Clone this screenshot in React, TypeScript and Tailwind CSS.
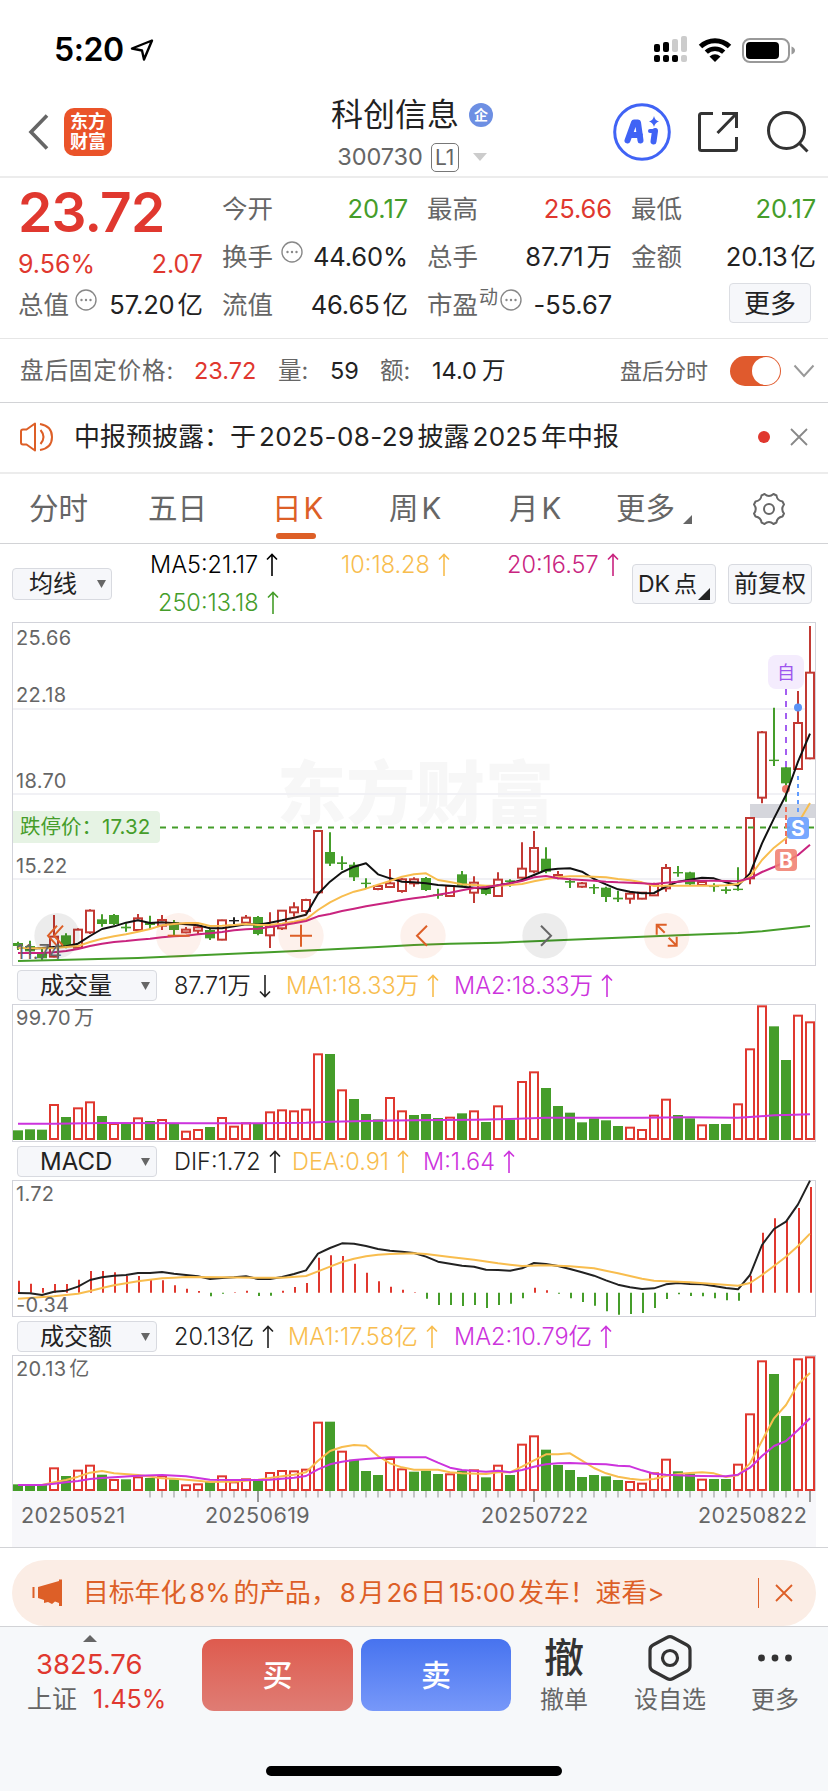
import React from "react";

type Pt = [number, number];
type Candle = [string, number, number, number, number];

const RED = "#e0382f";
const DARK_RED = "#c23a34";
const GREEN = "#459d2a";
const YELLOW = "#f8bd4e";
const PURPLE = "#cc33dd";
const MAGENTA = "#c9247f";

const x = (i: number) => 18 + 12 * i;

// kind, body top, body bottom, high, low (third-pixel units)
const candles: Candle[] = [
  ["g", 969, 978, 965, 990], ["g", 978, 994, 962, 1005], ["g", 998, 1015, 985, 1020], ["r", 950, 1010, 885, 1012],
  ["g", 946, 980, 940, 985], ["r", 929, 983, 925, 985], ["r", 872, 937, 868, 942], ["g", 898, 912, 883, 920],
  ["g", 885, 912, 882, 915], ["g", 920, 925, 910, 935], ["r", 895, 930, 882, 935], ["g", 907, 915, 887, 927],
  ["r", 900, 917, 885, 930], ["g", 906, 930, 900, 945], ["r", 929, 937, 921, 940], ["r", 922, 932, 918, 942],
  ["g", 930, 955, 925, 960], ["r", 901, 959, 899, 961], ["k", 900, 904, 892, 912], ["r", 893, 908, 885, 912],
  ["g", 891, 942, 888, 946], ["r", 920, 946, 877, 984], ["r", 872, 925, 870, 930], ["r", 862, 877, 847, 890],
  ["r", 840, 873, 836, 880], ["r", 633, 817, 630, 820], ["g", 696, 731, 637, 738], ["g", 727, 732, 709, 750],
  ["g", 734, 772, 727, 783], ["g", 788, 792, 775, 805], ["r", 798, 807, 793, 811], ["r", 790, 801, 747, 804],
  ["r", 778, 813, 775, 818], ["r", 778, 790, 772, 800], ["g", 774, 810, 771, 813], ["g", 823, 827, 806, 836],
  ["r", 798, 828, 796, 830], ["g", 763, 797, 753, 800], ["r", 788, 818, 769, 849], ["g", 806, 822, 803, 826],
  ["r", 779, 828, 757, 830], ["g", 781, 786, 778, 800], ["r", 746, 773, 667, 776], ["r", 684, 754, 633, 760],
  ["g", 716, 755, 682, 760], ["r", 765, 773, 753, 778], ["g", 783, 788, 775, 804], ["r", 790, 800, 786, 803],
  ["g", 801, 805, 793, 822], ["g", 803, 831, 800, 846], ["g", 833, 838, 812, 846], ["r", 821, 836, 815, 851],
  ["r", 818, 836, 816, 838], ["r", 795, 826, 788, 828], ["r", 744, 805, 732, 815], ["g", 756, 760, 738, 770],
  ["g", 757, 793, 755, 797], ["r", 786, 795, 780, 798], ["g", 797, 801, 790, 815], ["g", 808, 813, 800, 821],
  ["g", 806, 810, 742, 812], ["r", 594, 775, 592, 793], ["r", 337, 533, 333, 550], ["g", 419, 423, 263, 438],
  ["g", 442, 490, 436, 545], ["r", 309, 447, 213, 450], ["r", 158, 415, 18, 418],
];

const ma5 = [982, 986, 984, 981, 979, 971, 948, 927, 919, 908, 901, 909, 907, 910, 913, 916, 925, 925, 919, 913, 914, 908, 901, 893, 884, 822, 785, 757, 740, 730, 763, 775, 785, 787, 790, 795, 797, 800, 803, 806, 796, 790, 780, 765, 750, 746, 745, 755, 777, 793, 808, 815, 820, 819, 800, 785, 779, 773, 775, 787, 797, 760, 670, 595, 525, 425, 341];
const ma10 = [983, 985, 985, 984, 981, 978, 966, 956, 949, 943, 935, 927, 916, 912, 909, 909, 918, 917, 915, 912, 915, 914, 911, 905, 898, 870, 847, 829, 815, 806, 794, 783, 770, 763, 760, 780, 786, 793, 795, 797, 797, 795, 792, 784, 777, 772, 769, 769, 770, 772, 777, 781, 787, 798, 797, 797, 797, 797, 797, 796, 792, 770, 720, 683, 655, 610, 549];
const ma20 = [999, 999, 999, 997, 993, 987, 978, 971, 966, 963, 959, 956, 952, 949, 947, 943, 940, 936, 931, 928, 926, 921, 916, 910, 903, 889, 882, 873, 866, 859, 853, 847, 840, 835, 830, 824, 818, 811, 804, 801, 796, 790, 783, 772, 768, 775, 778, 780, 782, 785, 787, 788, 790, 792, 788, 785, 782, 782, 782, 783, 784, 775, 756, 741, 725, 705, 674];
const ma250: Pt[] = [[0, 1023], [10, 1014], [20, 998], [25, 990], [30, 981], [33, 975], [36, 971], [40, 968], [44, 962], [50, 953], [55, 946], [60, 939], [62, 934], [66, 918]];

const kinds = "gggrgrrgrgrgrgrrgrrrgrrrrrgrgggrrgggrgrgrgrrggggggg" + "rrrrggrggrrrggrr";

const volume = [496, 493, 494, 417, 456, 427, 409, 453, 474, 475, 457, 468, 462, 475, 497, 492, 486, 456, 482, 472, 475, 439, 433, 436, 431, 265, 267, 373, 402, 447, 463, 396, 436, 450, 447, 459, 455, 445, 436, 471, 421, 464, 348, 319, 369, 423, 443, 472, 460, 466, 483, 485, 492, 449, 401, 450, 460, 478, 477, 477, 415, 250, 121, 184, 285, 149, 169];
const volumeMa: Pt[] = [[0, 476], [3, 476], [7, 474], [15, 475], [20, 475], [24, 473], [26, 470], [30, 467], [33, 466], [38, 464], [41, 462], [44, 458], [52, 458], [56, 457], [60, 458], [61, 456], [63, 451], [64, 450], [66, 448]];

const amount = [403, 403, 404, 352, 378, 359, 344, 374, 387, 388, 379, 384, 376, 388, 403, 400, 396, 376, 394, 385, 391, 366, 360, 361, 356, 215, 215, 302, 329, 363, 375, 324, 355, 365, 362, 372, 370, 362, 358, 382, 344, 375, 281, 256, 299, 345, 360, 381, 375, 379, 390, 393, 398, 367, 326, 364, 371, 386, 387, 387, 341, 190, 31, 72, 198, 25, 19];
const amountMa1: Pt[] = [[0, 405], [2, 405], [3, 397], [4, 390], [5, 380], [6, 368], [7, 363], [8, 370], [10, 375], [12, 385], [13, 386], [14, 389], [15, 392], [16, 396], [17, 395], [18, 395], [19, 392], [20, 389], [21, 384], [22, 379], [23, 374], [24, 367], [25, 332], [26, 303], [27, 291], [28, 285], [29, 287], [30, 318], [31, 340], [32, 352], [33, 359], [35, 359], [36, 367], [37, 370], [39, 372], [40, 367], [41, 367], [42, 350], [43, 331], [44, 313], [45, 313], [46, 310], [47, 332], [48, 354], [49, 370], [50, 380], [51, 386], [52, 390], [53, 387], [54, 378], [55, 372], [56, 369], [57, 367], [58, 370], [59, 381], [60, 376], [61, 340], [62, 272], [63, 205], [64, 165], [65, 103], [66, 69]];
const amountMa2: Pt[] = [[0, 405], [2, 405], [3, 401], [4, 397], [5, 393], [6, 387], [7, 384], [8, 382], [10, 377], [12, 375], [14, 379], [16, 389], [18, 390], [20, 390], [21, 389], [22, 386], [23, 383], [24, 378], [25, 358], [26, 343], [27, 335], [28, 330], [29, 327], [31, 322], [34, 322], [35, 338], [36, 353], [37, 360], [39, 365], [40, 362], [41, 367], [42, 360], [43, 350], [44, 343], [45, 340], [46, 339], [48, 342], [49, 343], [50, 347], [51, 349], [52, 361], [53, 371], [54, 374], [56, 377], [57, 378], [59, 379], [60, 374], [61, 353], [62, 318], [63, 288], [64, 273], [65, 240], [66, 205]];

const macdBars = [302, 311, 324, 312, 312, 299, 273, 273, 277, 288, 288, 300, 301, 316, 326, 333, 349, 341, 337, 332, 348, 347, 332, 321, 309, 233, 226, 228, 251, 278, 304, 320, 329, 337, 356, 375, 375, 378, 375, 384, 375, 371, 355, 323, 331, 341, 355, 366, 377, 394, 404, 402, 399, 384, 357, 343, 348, 349, 355, 361, 362, 287, 158, 115, 123, 84, 21];
const dif = [339, 340, 345, 335, 332, 320, 300, 292, 287, 285, 279, 279, 276, 281, 285, 289, 297, 294, 292, 289, 297, 297, 291, 282, 271, 221, 204, 190, 191, 198, 207, 212, 215, 219, 230, 245, 251, 257, 260, 269, 270, 272, 265, 249, 252, 258, 267, 277, 287, 301, 314, 322, 327, 325, 313, 309, 312, 313, 318, 324, 328, 285, 195, 147, 125, 73, 2];
const dea: Pt[] = [[0, 356], [3, 349], [5, 341], [6, 333], [7, 324], [8, 316], [9, 310], [10, 304], [11, 299], [12, 295], [13, 293], [14, 291], [17, 292], [20, 293], [22, 293], [24, 288], [25, 274], [26, 260], [27, 246], [28, 236], [29, 229], [30, 224], [31, 222], [33, 220], [34, 222], [36, 231], [38, 239], [40, 250], [41, 254], [42, 258], [44, 256], [46, 259], [48, 265], [50, 280], [52, 296], [53, 302], [54, 304], [56, 307], [58, 312], [60, 317], [61, 309], [62, 285], [63, 258], [64, 230], [65, 198], [66, 161]];

function Line({ pts, dy, color, w = 2 }: { pts: number[] | Pt[]; dy: number; color: string; w?: number }) {
  const d = (pts as (number | Pt)[])
    .map((p, i) => (typeof p === "number" ? `${x(i)},${dy + p / 3}` : `${x(p[0])},${dy + p[1] / 3}`))
    .join(" ");
  return <polyline points={d} fill="none" stroke={color} strokeWidth={w} strokeLinejoin="round" />;
}

function Bars({ tops, dy, base }: { tops: number[]; dy: number; base: number }) {
  return (
    <g>
      {tops.map((t, i) => {
        const y = dy + t / 3;
        return kinds[i] === "r" ? (
          <rect key={i} x={x(i) - 4} y={y + 1} width={8} height={base - y - 2} fill="#fff" stroke={RED} strokeWidth={2} />
        ) : (
          <rect key={i} x={x(i) - 5} y={y} width={10} height={base - y} fill={GREEN} />
        );
      })}
    </g>
  );
}

function Frame({ h }: { h: number }) {
  return <rect x={12.5} y={0.5} width={803} height={h - 1} fill="none" stroke="#d2d3da" />;
}

function CircleBtn({ cx, gray = false, children }: { cx: number; gray?: boolean; children?: React.ReactNode }) {
  return (
    <g transform={`translate(${cx} 313.7)`} fill="none" strokeWidth={2}>
      <circle r={22.7} fill={gray ? "#000" : "#e8622a"} fillOpacity={gray ? 0.075 : 0.09} />
      <g stroke={gray && cx > 100 ? "#666" : "#dd5f27"}>{children}</g>
    </g>
  );
}

function MainChart() {
  const dy = -2;
  return (
    <div className="relative h-[344px]">
      <svg width={828} height={344} className="block">
        <text x={277} y={197} fontSize={69} fontWeight={900} fill="#f7f7f7" className="font-['Noto_Sans_CJK_SC',sans-serif]" textLength={277}>东方财富</text>
        {[87, 172, 257].map((y) => (
          <line key={y} x1={13} x2={815} y1={y} y2={y} stroke="#f1f1f5" strokeWidth={2} />
        ))}
        <rect x={750} y={182} width={65} height={14} fill="#d5d6dc" />
        {candles.map(([k, t, b, h, l], i) => {
          const c = k === "g" ? GREEN : k === "k" ? "#222" : DARK_RED;
          const top = dy + t / 3;
          const bot = dy + b / 3;
          return (
            <g key={i} stroke={c}>
              <line x1={x(i)} x2={x(i)} y1={dy + h / 3} y2={k === "r" ? top : dy + l / 3} strokeWidth={2} />
              {k === "r" && <line x1={x(i)} x2={x(i)} y1={bot} y2={dy + l / 3} strokeWidth={2} />}
              {k === "r" ? (
                <rect x={x(i) - 4} y={top} width={8} height={bot - top} fill="#fff" strokeWidth={2} />
              ) : (
                <rect x={x(i) - 5} y={top} width={10} height={Math.max(1.4, bot - top)} fill={c} stroke="none" />
              )}
            </g>
          );
        })}
        <line x1={160} x2={815} y1={205.5} y2={205.5} stroke={GREEN} strokeWidth={2} strokeDasharray="6 6" />
        <line x1={786} x2={786} y1={67} y2={145} stroke="#a35ff0" strokeWidth={2} strokeDasharray="6 6" />
        <line x1={786} x2={786} y1={185} y2={223} stroke="#f0705c" strokeWidth={2} strokeDasharray="5 3" />
        <line x1={798} x2={798} y1={154} y2={193} stroke="#5f9bff" strokeWidth={2} strokeDasharray="4 4" />
        <circle cx={786} cy={167} r={4} fill="#ee7767" />
        <circle cx={798} cy={85.5} r={4} fill="#5b93f5" />
        <Line pts={ma5} dy={dy} color="#111" />
        <Line pts={ma10} dy={dy} color={YELLOW} />
        <Line pts={ma20} dy={dy} color={MAGENTA} />
        <Line pts={ma250} dy={dy} color={GREEN} />
        <rect x={775} y={227} width={22} height={22} rx={4} fill="#f0806f" fillOpacity={0.88} />
        <rect x={787} y={195} width={22} height={22} rx={4} fill="#6ba1ff" fillOpacity={0.92} />
        <text x={786} y={245.5} textAnchor="middle" fontSize={21} fontWeight={700} fill="#fff" className="font-['Inter',sans-serif]">B</text>
        <text x={798} y={213.5} textAnchor="middle" fontSize={21} fontWeight={700} fill="#fff" className="font-['Inter',sans-serif]">S</text>
        <CircleBtn cx={57} gray><path d="M0 -10 L-9 0 L0 10 M6 -10 L-3 0 L6 10" /></CircleBtn>
        <CircleBtn cx={178.7}><path d="M-11 0 H11" /></CircleBtn>
        <CircleBtn cx={301}><path d="M-11 0 H11 M0 -11 V11" /></CircleBtn>
        <CircleBtn cx={423}><path d="M4 -10 L-6 0 L4 10" /></CircleBtn>
        <CircleBtn cx={545} gray><path d="M-4 -10 L6 0 L-4 10" /></CircleBtn>
        <CircleBtn cx={666.7}><path d="M-10 -1 V-11 H0 M-10 -11 L-2 -3 M10 1 V10 H1 M10 10 L2 2" /></CircleBtn>
        <Frame h={344} />
      </svg>
      <ChartLabel className="top-[6px]">25.66</ChartLabel>
      <ChartLabel className="top-[63px]">22.18</ChartLabel>
      <ChartLabel className="top-[149px]">18.70</ChartLabel>
      <ChartLabel className="top-[234px]">15.22</ChartLabel>
      <ChartLabel className="top-[320px]">11.74</ChartLabel>
      <div className="absolute left-[13px] top-[189px] flex h-8 w-[147px] items-center rounded-r-[4px] bg-[#e6f3e4] pl-[7px] pt-px text-[20.5px] text-[#459d2a]">
        跌停价：<span className="tracking-[0.1px]">17.32</span>
      </div>
      <div className="absolute left-[768px] top-[33px] flex h-[34px] w-9 items-center justify-center rounded-lg bg-[#f4ecfd] pt-[2px] text-[18px] text-[#9d55ee]">自</div>
    </div>
  );
}

function ChartLabel({ className, children }: { className: string; children: React.ReactNode }) {
  return <span className={`absolute left-[16px] text-[20px] leading-5 tracking-[0.3px] text-[#666] ${className}`}>{children}</span>;
}

function Arrow({ down = false }: { down?: boolean }) {
  return (
    <svg width={12} height={24} viewBox="0 0 12 24" className={`ml-2 shrink-0 ${down ? "rotate-180" : ""}`} fill="none" stroke="currentColor" strokeWidth={1.6}>
      <path d="M6 23V1.5M1 6.5L6 1.5L11 6.5" />
    </svg>
  );
}

function Stat({ children, className, down }: { children: React.ReactNode; className: string; down?: boolean }) {
  return (
    <span className={`flex shrink-0 items-center text-[23.5px] font-[350] ${className}`}>
      <span>{children}</span>
      <Arrow down={down} />
    </span>
  );
}

function Down({ className = "" }: { className?: string }) {
  return (
    <svg width={9} height={8} className={`shrink-0 ${className}`}>
      <path d="M0 0H9L4.5 8Z" fill="#666" />
    </svg>
  );
}

function IndicatorRow({ name, children }: { name: string; children: React.ReactNode }) {
  return (
    <div className="flex h-[38px] items-center pl-[17px] pt-px">
      <div className="mr-[17px] flex h-[31px] w-[140px] shrink-0 items-center justify-between rounded-[4px] border border-[#d8dae0] bg-[#f6f7fa] pl-[22px] pr-[6px] text-[24px] text-[#222]">
        {name}
        <Down />
      </div>
      {children}
    </div>
  );
}

function Dots() {
  return (
    <svg width={22} height={22} viewBox="0 0 22 22" className="mb-[10px] ml-1.5 shrink-0">
      <circle cx={11} cy={11} r={10} fill="none" stroke="#888" strokeWidth={1.4} />
      <circle cx={6.5} cy={11} r={1.2} fill="#888" />
      <circle cx={11} cy={11} r={1.2} fill="#888" />
      <circle cx={15.5} cy={11} r={1.2} fill="#888" />
    </svg>
  );
}

function Field({ label, value, unit, color = "text-[#222]", extra }: { label: string; value: string; unit?: string; color?: string; extra?: React.ReactNode }) {
  return (
    <div className="flex h-12 items-center whitespace-nowrap text-[25.5px] text-[#666]">
      {label}
      {extra}
      <span className={`ml-auto tracking-[-0.1px] ${color}`}>
        {value}
        {unit && <span className="ml-[3px]">{unit}</span>}
      </span>
    </div>
  );
}

function Tab({ className, children }: { className: string; children: React.ReactNode }) {
  return <span className={`shrink-0 text-left ${className}`}>{children}</span>;
}

export default function App() {
  return (
    <div className="flex h-[1792px] w-[828px] flex-col overflow-hidden whitespace-nowrap bg-white font-['Inter','Noto_Sans_CJK_SC',sans-serif] leading-none text-[#222]">
      <div className="flex h-[88px] shrink-0 items-center pb-0 pl-[54px] pt-[11px]">
        <span className="w-[76px] text-[32px] font-semibold tracking-[-0.4px] text-black">5:20</span>
        <svg width={24} height={22} viewBox="0 0 24 22" fill="none" stroke="#000" strokeWidth={2.4} strokeLinejoin="round">
          <path d="M22 1.5L2 9.5L12 11.5L14 20.5Z" />
        </svg>
        <svg width={144} height={28} viewBox="0 0 144 28" className="ml-[499px]">
          {[[1, 8, 8, "#000"], [10, 6, 10, "#000"], [19, 3, 13, "#ccc"], [28, 0, 16, "#ccc"]].map(([a, b, c, d], i) => (
            <rect key={i} x={a as number} y={b as number} width={6} height={c as number} rx={2} fill={d as string} />
          ))}
          {[1, 10, 19, 28].map((a) => (
            <rect key={a} x={a} y={19} width={6} height={7} rx={2} fill={a === 28 ? "#ccc" : "#000"} />
          ))}
          <path d="M47.5 10.5A21 21 0 0 1 76.5 10.5" fill="none" stroke="#000" strokeWidth={5} />
          <path d="M53.3 16.2A12.5 12.5 0 0 1 70.7 16.2" fill="none" stroke="#000" strokeWidth={4.6} />
          <path d="M56.5 20.5Q62 16 67.5 20.5L62 26Z" fill="#000" />
          <rect x={90} y={3} width={46} height={23} rx={7} fill="none" stroke="#999" strokeWidth={2} />
          <rect x={93} y={6} width={33} height={17} rx={4} fill="#000" />
          <path d="M138.5 10.5Q142 12 142 14.5T138.5 18.5Z" fill="#999" />
        </svg>
      </div>

      <div className="grid h-[90px] shrink-0 grid-cols-[312px_200px_316px] border-b-2 border-[#ececec]">
        <div className="flex items-center pl-[28px]">
          <svg width={22} height={36} fill="none" stroke="#666" strokeWidth={3.6}>
            <path d="M19 1.5L3 18L19 34.5" />
          </svg>
          <div className="ml-[14px] flex h-12 w-12 flex-col items-center justify-center gap-[2px] rounded-[10px] bg-[#ea5329] text-[18px] font-bold text-white">
            <span>东方</span>
            <span>财富</span>
          </div>
        </div>
        <div className="flex flex-col items-center pt-[10px]">
          <div className="flex h-[34px] items-center">
            <span className="text-[32px]">科创信息</span>
            <span className="ml-[10px] flex size-6 items-center justify-center rounded-full bg-[#6d8fe3] text-[14px] font-bold text-white">企</span>
          </div>
          <div className="mt-[10px] flex h-[30px] items-center text-[#666]">
            <span className="text-[23.5px] tracking-[-0.1px]">300730</span>
            <span className="ml-[8px] flex h-[29px] w-[28px] items-center justify-center rounded-[5px] border border-[#777] text-[21px]">L1</span>
            <svg width={14} height={8} className="ml-[14px]"><path d="M0 0H14L7 8Z" fill="#ccc" /></svg>
          </div>
        </div>
        <div className="flex items-center pl-[101px]">
          <svg width={58} height={58} viewBox="0 0 58 58">
            <circle cx={29} cy={29} r={27.3} fill="none" stroke="#4063f5" strokeWidth={3} />
            <g fill="none" stroke="#4063f5" strokeWidth={6} strokeLinecap="round" strokeLinejoin="round">
              <path d="M14.5 37.5L21 19.5H25L27.5 37.5M18 32H27" />
              <path d="M42 28L40.500 38.500" />
              <path d="M37 28H42" strokeWidth={4} />
            </g>
            <path d="M41 13Q42 17.500 46 18.500Q42 19.500 41 24Q40 19.500 36 18.500Q40 17.500 41 13Z" fill="#4063f5" />
          </svg>
          <svg width={42} height={42} viewBox="0 0 42 42" className="ml-[26px]" fill="none" stroke="#333" strokeWidth={3}>
            <path d="M16 2.500H4.500Q2.500 2.500 2.500 4.500V37.500Q2.500 39.500 4.500 39.500H37.500Q39.500 39.500 39.500 37.500V26" />
            <path d="M25 2.500H39.500V17M39 3L20.500 22" />
          </svg>
          <svg width={44} height={44} viewBox="0 0 44 44" className="ml-[27px]" fill="none" stroke="#333" strokeWidth={3}>
            <circle cx={20.5} cy={20.5} r={18} />
            <path d="M33 33L41.500 41.500" />
          </svg>
        </div>
      </div>

      <div className="flex h-[160px] shrink-0 pl-[18px]">
        <div className="w-[185px]">
          <div className="flex h-[69px] items-center text-[55px] font-semibold tracking-[-0.8px] text-[#e0382f]">23.72</div>
          <div className="flex h-[34px] items-center justify-between text-[25px] text-[#e0382f]">
            <span>9.56%</span>
            <span>2.07</span>
          </div>
          <Field label="总值" value="57.20" unit="亿" extra={<Dots />} />
        </div>
        <div className="ml-[19px] w-[186px] pt-[7px]">
          <Field label="今开" value="20.17" color="text-[#459d2a]" />
          <Field label="换手" value="44.60%" extra={<span className="ml-[2px] flex"><Dots /></span>} />
          <Field label="流值" value="46.65" unit="亿" />
        </div>
        <div className="ml-[19px] w-[185px] pt-[7px]">
          <Field label="最高" value="25.66" color="text-[#e0382f]" />
          <Field label="总手" value="87.71" unit="万" />
          <Field label="市盈" value="-55.67" extra={<><span className="mb-4 ml-px text-[19px]">动</span><span className="-ml-1 flex"><Dots /></span></>} />
        </div>
        <div className="ml-[19px] w-[185px] pt-[7px]">
          <Field label="最低" value="20.17" color="text-[#459d2a]" />
          <Field label="金额" value="20.13" unit="亿" />
          <div className="ml-[98px] mt-[2px] flex h-10 w-[82px] items-center justify-center rounded-[4px] border border-[#dcdee3] bg-[#f6f7fa] pt-px text-[26px]">更多</div>
        </div>
      </div>

      <div className="flex h-[65px] shrink-0 items-center border-b border-t border-b-[#d2d3d6] border-t-[#e6e6e6] pl-[20px] text-[23.5px]">
        <span className="w-[174px] tracking-[0.9px] text-[#666]">盘后固定价格:</span>
        <span className="w-[84px] text-[#e0382f]">23.72</span>
        <span className="w-[52px] text-[#666]">量:</span>
        <span className="w-[50px]">59</span>
        <span className="w-[52px] text-[#666]">额:</span>
        <span className="w-[188px]">14.0<span className="ml-[5px]">万</span></span>
        <span className="w-[110px] text-[22px] text-[#666]">盘后分时</span>
        <span className="flex h-[30px] w-[51px] items-center justify-end rounded-full bg-[#e05a2d] pr-px">
          <span className="size-[28px] rounded-full bg-white" />
        </span>
        <svg width={22} height={14} className="ml-[12px]" fill="none" stroke="#999" strokeWidth={2}><path d="M1.500 1.500L11 12L20.500 1.500" /></svg>
      </div>

      <div className="flex h-[71px] shrink-0 items-center border-b-2 border-[#ececec] pb-px pl-[19px]">
        <svg width={36} height={30} viewBox="0 0 36 30" fill="none" stroke="#dd5f27" strokeWidth={2} strokeLinejoin="round">
          <path d="M16 1.500V28.500L7.500 22.500H4Q2 22.500 2 20.500V9.500Q2 7.500 4 7.500H7.500Z" />
          <path d="M21.500 8Q27.500 15 21.500 22M21 2Q33 4 33 15T21 28" />
        </svg>
        <span className="ml-[19px] w-[684px] text-[26px] text-[#222]">中报预披露：于<span className="mx-[3px] tracking-[0.4px]">2025-08-29</span>披露<span className="mx-[3px] tracking-[0.4px]">2025</span>年中报</span>
        <span className="size-3 rounded-full bg-[#e0382f]" />
        <svg width={18} height={18} className="ml-[20px]" stroke="#888" strokeWidth={1.8}><path d="M1 1L17 17M17 1L1 17" /></svg>
      </div>

      <div className="flex h-[70px] shrink-0 items-center border-b border-[#d2d3d6] pl-[29px] text-[29.5px] text-[#666]">
        <Tab className="w-[119px]">分时</Tab>
        <Tab className="w-[124px]">五日</Tab>
        <div className="relative flex h-full w-[117px] shrink-0 items-center text-[#dd5f27]">
          日<span className="ml-[2px]">K</span>
          <span className="absolute bottom-[4px] left-[4px] h-[6px] w-10 rounded-full bg-[#dd5f27]" />
        </div>
        <Tab className="w-[120px]">周<span className="ml-[3px]">K</span></Tab>
        <Tab className="w-[107px]">月<span className="ml-[3px]">K</span></Tab>
        <Tab className="w-[67px]">更多</Tab>
        <svg width={9} height={9} className="mt-[22px]"><path d="M9 0V9H0Z" fill="#666" /></svg>
        <svg width={34} height={34} viewBox="0 0 34 34" className="ml-[60px]" fill="none" stroke="#666" strokeWidth={2} strokeLinejoin="round">
          <path d="M12.500 2Q17 6 21.500 2L24.500 3.500Q25 8.500 30.500 9.500L32 12.500Q28.500 17 32 21.500L30.500 24.500Q25 25.500 24.500 30.500L21.500 32Q17 28 12.500 32L9.500 30.500Q9 25.500 3.500 24.500L2 21.500Q5.500 17 2 12.500L3.500 9.500Q9 8.500 9.500 3.500Z" />
          <circle cx={17} cy={17} r={5} />
        </svg>
      </div>

      <div className="flex h-[78px] shrink-0 items-center pl-[12px] pt-[2px]">
        <div className="flex h-8 w-[100px] shrink-0 items-center justify-between rounded-[4px] border border-[#d8dae0] bg-[#f6f7fa] pl-[16px] pr-[5px] text-[24px]">均线<Down /></div>
        <div className="ml-[38px] grid w-[482px] shrink-0 grid-cols-[191px_166px_125px] content-center">
          <div className="flex h-[38px]"><Stat className="text-black">MA5:21.17</Stat></div>
          <div className="flex h-[38px]"><Stat className="text-[#f8bd4e]">10:18.28</Stat></div>
          <div className="flex h-[38px]"><Stat className="text-[#c9247f]">20:16.57</Stat></div>
          <div className="flex h-[38px]"><Stat className="pl-[8px] text-[#459d2a]">250:13.18</Stat></div>
        </div>
        <div className="relative flex h-10 w-[84px] shrink-0 items-center rounded-[4px] border border-[#d8dae0] bg-[#f6f7fa] pl-[5px] text-[23px]">
          DK<span className="ml-[4px]">点</span>
          <svg width={12} height={12} className="absolute bottom-[3px] right-[5px]"><path d="M12 0V12H0Z" fill="#222" /></svg>
        </div>
        <div className="ml-3 flex h-10 w-[84px] shrink-0 items-center justify-center rounded-[4px] border border-[#d8dae0] bg-[#f6f7fa] text-[24px]">前复权</div>
      </div>

      <MainChart />

      <IndicatorRow name="成交量">
        <Stat className="w-[112px]" down>87.71万</Stat>
        <Stat className="w-[168px] text-[#f8bd4e]">MA1:18.33万</Stat>
        <Stat className="text-[#cc33dd]">MA2:18.33万</Stat>
      </IndicatorRow>
      <div className="relative h-[138px] shrink-0">
        <svg width={828} height={138} className="block">
          <Frame h={138} />
          <Bars tops={volume} dy={-39} base={136} />
          <Line pts={volumeMa} dy={-39} color={PURPLE} />
        </svg>
        <ChartLabel className="top-[4px]">99.70<span className="ml-[3px]">万</span></ChartLabel>
      </div>

      <IndicatorRow name="MACD">
        <Stat className="w-[118px]">DIF:1.72</Stat>
        <Stat className="w-[131px] text-[#f8bd4e]">DEA:0.91</Stat>
        <Stat className="text-[#cc33dd]">M:1.64</Stat>
      </IndicatorRow>
      <div className="relative h-[137px] shrink-0">
        <svg width={828} height={137} className="block">
          <Frame h={137} />
          {macdBars.map((t, i) => (
            <line key={i} x1={x(i) + 1} x2={x(i) + 1} y1={112.7} y2={t / 3} stroke={t > 338 ? GREEN : RED} strokeWidth={2} />
          ))}
          <Line pts={dif} dy={0} color="#222" />
          <Line pts={dea} dy={0} color={YELLOW} />
        </svg>
        <ChartLabel className="top-[4px]">1.72</ChartLabel>
        <ChartLabel className="top-[115px]">-0.34</ChartLabel>
      </div>

      <IndicatorRow name="成交额">
        <Stat className="w-[114px]">20.13亿</Stat>
        <Stat className="w-[166px] text-[#f8bd4e]">MA1:17.58亿</Stat>
        <Stat className="text-[#cc33dd]">MA2:10.79亿</Stat>
      </IndicatorRow>
      <div className="relative h-[136px] shrink-0">
        <svg width={828} height={136} className="block">
          <Frame h={137} />
          <Bars tops={amount} dy={-5} base={136} />
          <Line pts={amountMa1} dy={-5} color={YELLOW} />
          <Line pts={amountMa2} dy={-5} color={PURPLE} />
        </svg>
        <ChartLabel className="top-[4px]">20.13<span className="ml-[3px]">亿</span></ChartLabel>
      </div>
      <div className="mx-3 h-[56px] shrink-0 bg-[#f7f7fa] text-[21.5px] tracking-[0.4px] text-[#666]">
        <svg width={804} height={11} className="block">
          {candles.map((_, i) =>
            i < 11 ? null : (
              <line key={i} x1={x(i) - 12} x2={x(i) - 12} y1={0} y2={i === 20 || i === 43 || i === 66 ? 11 : 6.5} stroke={i === 20 || i === 43 || i === 66 ? "#999" : "#c4c4c6"} strokeWidth={2} />
            ),
          )}
        </svg>
        <div className="flex pl-[9px] pt-[3px]">
          <span className="w-[184px]">20250521</span>
          <span className="w-[276px]">20250619</span>
          <span className="w-[217px]">20250722</span>
          <span>20250822</span>
        </div>
      </div>

      <div className="h-[79px] shrink-0 border-t border-[#d2d3d6] px-3 pt-3">
        <div className="flex h-[66px] items-center rounded-[33px] bg-[#fbede5] pl-[20px] text-[25.8px] text-[#dd5f27]">
          <svg width={32} height={28} viewBox="0 0 32 28" fill="#dd5f27">
            <path d="M0.500 8H2.500V19H0.500ZM6 8L27 2V0.500H30V27H27V24L23 22.500L20 25L16 23L12 24V21L6 19Z" />
          </svg>
          <span className="ml-[19px] w-[675px]">目标年化<span className="mx-[3px]">8%</span>的产品，<span className="mx-[3px]">8</span>月<span className="mx-[2px]">26</span>日<span className="mx-[3px]">15:00</span>发车！速看&gt;</span>
          <span className="h-[30px] w-px bg-[#dd5f27]" />
          <svg width={18} height={18} className="ml-[16px]" stroke="#dd5f27" strokeWidth={1.8}><path d="M1 1L17 17M17 1L1 17" /></svg>
        </div>
      </div>

      <div className="flex h-[165px] shrink-0 flex-col border-t border-[#d2d3d6] bg-[#f6f8fa]">
        <div className="flex h-[92px] pl-[20px] pt-[8px]">
          <div className="flex w-[182px] flex-col">
            <svg width={14} height={7} className="ml-[63px]"><path d="M7 0L14 7H0Z" fill="#666" /></svg>
            <span className="ml-[16px] mt-[9px] text-[27.5px] text-[#e0382f]">3825.76</span>
            <span className="ml-[7px] mt-[8px] text-[25px] text-[#666]">上证<span className="ml-[16px] text-[#e0382f]">1.45%</span></span>
          </div>
          <div className="mt-[4px] flex h-[72px] w-[151px] shrink-0 items-center justify-center rounded-xl bg-linear-to-b from-[#de5b4e] to-[#df7c74] text-[30px] font-medium text-white">买</div>
          <div className="ml-2 mt-[4px] flex h-[72px] w-[150px] shrink-0 items-center justify-center rounded-xl bg-linear-to-b from-[#4773ef] to-[#7798f9] text-[30px] font-medium text-white">卖</div>
          <div className="flex w-[106px] flex-col items-center text-[24px] text-[#666]">
            <span className="flex h-[46px] items-center text-[40px] font-medium text-[#333]">撤</span>
            <span className="mt-[7px]">撤单</span>
          </div>
          <div className="flex w-[106px] flex-col items-center text-[24px] text-[#666]">
            <svg width={44} height={46} viewBox="0 0 44 46" fill="none" stroke="#333" strokeWidth={3.2} strokeLinejoin="round">
              <path d="M19 2.500Q22 0.800 25 2.500L39 10Q42 11.500 42 15V31Q42 34.500 39 36L25 43.500Q22 45.200 19 43.500L5 36Q2 34.500 2 31V15Q2 11.500 5 10Z" />
              <circle cx={22} cy={23} r={7.5} />
            </svg>
            <span className="mt-[7px]">设自选</span>
          </div>
          <div className="flex w-[104px] flex-col items-center text-[24px] text-[#666]">
            <svg width={44} height={46} viewBox="0 0 44 46" fill="#333">
              <circle cx={8.5} cy={23} r={3.4} />
              <circle cx={22} cy={23} r={3.4} />
              <circle cx={35.5} cy={23} r={3.4} />
            </svg>
            <span className="mt-[7px]">更多</span>
          </div>
        </div>
        <div className="ml-[266px] mt-[47px] h-[10px] w-[296px] rounded-full bg-black" />
      </div>
    </div>
  );
}
